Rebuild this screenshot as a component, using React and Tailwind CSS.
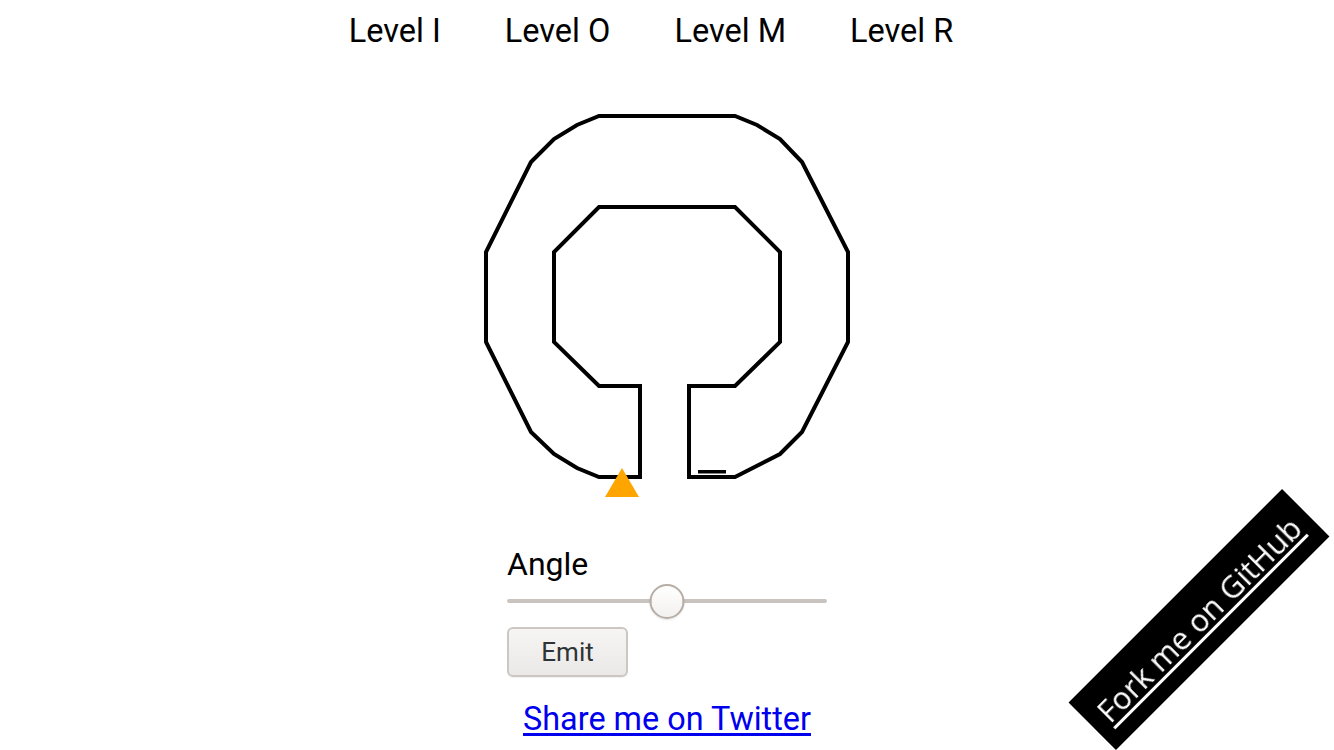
import React, { useState } from 'react'

const levels = ['Level I', 'Level O', 'Level M', 'Level R']

// maze walls, measured in page coordinates (svg viewBox matches the page)
const wall = [
  [599, 116], [735, 116], [757, 125], [780, 139], [802, 162], [848, 252],
  [848, 342], [802, 432], [780, 454], [735, 477], [689, 477], [689, 386],
  [735, 386], [780, 342], [780, 252], [735, 207], [599, 207], [554, 252],
  [554, 342], [599, 386], [640, 386], [640, 477], [599, 477], [577, 468],
  [554, 454], [531, 432], [486, 342], [486, 252], [531, 162], [554, 139],
  [577, 125],
]

function Maze() {
  const points = wall.map(p => p.join(',')).join(' ')
  return (
    <svg width="400" height="400" viewBox="467 100 400 400" className="block mx-auto">
      <polygon points={points} fill="none" stroke="#000" strokeWidth="4" strokeLinejoin="miter" />
      <rect x="698" y="470" width="28" height="3.5" fill="#000" />
      <polygon points="622,468 605,497 639,497" fill="#ffa500" />
    </svg>
  )
}

function AngleSlider({ value, onChange }) {
  const pct = value / 360
  return (
    <div
      className="relative flex h-[34px] w-[320px] cursor-pointer items-center"
      onClick={e => {
        const r = e.currentTarget.getBoundingClientRect()
        const v = Math.round(((e.clientX - r.left) / r.width) * 360)
        onChange(Math.max(0, Math.min(360, v)))
      }}
    >
      <div className="h-[4px] w-full rounded-full bg-[#c9c4bf]" />
      {/* thumb sits over the track */}
      <div
        className="absolute h-[35px] w-[35px] -translate-x-1/2 rounded-full border-2 border-[#b6aea6] bg-gradient-to-b from-white to-[#f3f1ef] shadow-[0_1px_2px_rgba(0,0,0,0.1)]"
        style={{ left: `${pct * 100}%` }}
      />
    </div>
  )
}

export default function App() {
  const [angle, setAngle] = useState(180)

  return (
    <div className="relative min-h-[750px] bg-white text-black font-['Roboto',sans-serif] text-[32px]">
      <div className="flex justify-center gap-[64px] pr-[32px] pt-[7px] text-[32.5px] leading-[48px]">
        {levels.map(l => (
          <span key={l} className="cursor-pointer">{l}</span>
        ))}
      </div>

      <div className="mt-[45px]">
        <Maze />
      </div>

      <div className="mx-auto mt-[44px] flex w-[320px] flex-col items-start">
        <div className="leading-[40px]">Angle</div>
        <AngleSlider value={angle} onChange={setAngle} />
        <button className="mt-[9px] h-[50px] w-[121px] rounded-[6px] border-2 border-[#cdc7c2] bg-gradient-to-b from-[#f6f5f4] to-[#ebe9e7] text-[26px] text-[#2e3436] shadow-[0_1px_1px_rgba(0,0,0,0.06)]">
          Emit
        </button>
      </div>

      <div className="mt-[22px] text-center text-[32.4px] leading-[40px]">
        <a href="#" className="text-[#0000ee] underline underline-offset-[3px]">Share me on Twitter</a>
      </div>

      <a
        href="#"
        className="fixed right-[-16px] bottom-[97px] flex h-[67px] w-[302px] -rotate-45 items-center justify-center bg-black text-[31px] text-white underline underline-offset-[4px] font-['Open_Sans',sans-serif]"
      >
        Fork me on GitHub
      </a>
    </div>
  )
}
